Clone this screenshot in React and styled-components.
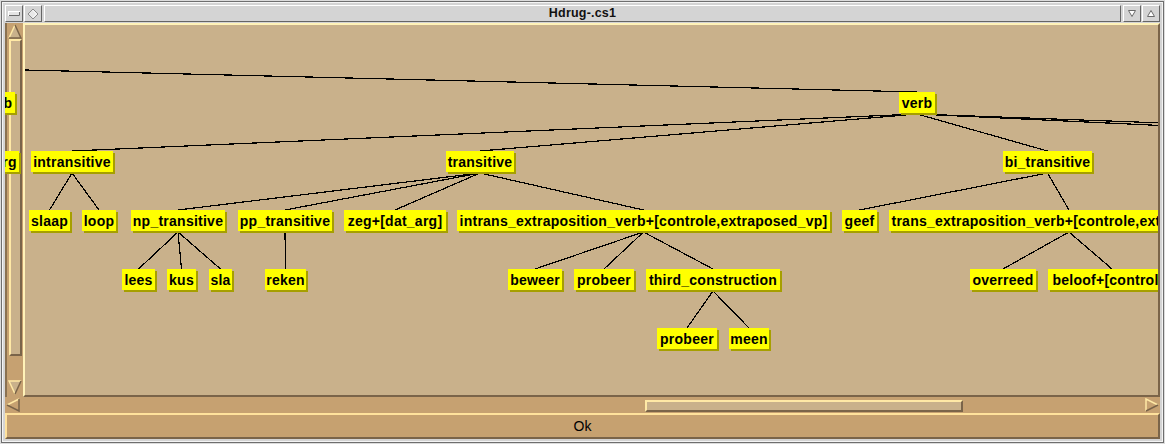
import React from "react";
import styled, { createGlobalStyle } from "styled-components";

const GlobalStyle = createGlobalStyle`
  html, body {
    margin: 0;
    padding: 0;
    background: #d4d4d4;
  }
  body {
    font-family: "Liberation Sans", Arial, sans-serif;
  }
`;

const LIGHT = "#ffe9a6";
const DARK = "#7a6449";
const TAN = "#c9b18b";
const ORANGE = "#c6a171";

const Window = styled.div`
  width: 1165px;
  height: 444px;
  box-sizing: border-box;
  padding: 5px;
  background: #d4d4d4;
  box-shadow: inset 0 0 0 1px #dcdcdc, inset 0 0 0 2px #6e6e6e,
    inset 0 0 0 3px #f4f4f4;
  display: flex;
  flex-direction: column;
`;

const TitleBar = styled.div`
  display: flex;
  gap: 1px;
  height: 17px;
  margin-bottom: 1px;
`;

const TitleButton = styled.div`
  width: 18px;
  box-sizing: border-box;
  border: 1px solid;
  border-color: #ffffff #656565 #656565 #ffffff;
  background: #d4d4d4;
  display: flex;
  align-items: center;
  justify-content: center;
`;

const TitleField = styled.div`
  flex: 1;
  margin: 0 1px;
  box-sizing: border-box;
  border: 1px solid;
  border-color: #ffffff #656565 #656565 #ffffff;
  background: #d4d4d4;
  font-weight: bold;
  font-size: 12.5px;
  letter-spacing: 0.2px;
  line-height: 15px;
  text-align: center;
  color: #111;
`;

const Body = styled.div`
  display: flex;
  height: 374px;
  position: relative;
  overflow: hidden;
`;

const VScroll = styled.div`
  width: 18px;
  box-sizing: border-box;
  border-left: 2px solid #8a7150;
  background: ${ORANGE};
  display: flex;
  flex-direction: column;
  align-items: center;
  padding-top: 1px;
`;

const VThumb = styled.div`
  width: 13px;
  height: ${(p) => p.$size}px;
  margin-top: ${(p) => p.$offset}px;
  box-sizing: border-box;
  background: ${TAN};
  border: 2px solid;
  border-color: ${LIGHT} ${DARK} ${DARK} ${LIGHT};
`;

const VFill = styled.div`
  flex: 1;
`;

const VEnd = styled.div`
  height: 2px;
`;

const Canvas = styled.div`
  flex: 1;
  position: relative;
  overflow: hidden;
  background: ${TAN};
  border: 2px solid;
  border-color: #fff2b8 ${DARK} ${DARK} #fff2b8;
`;

const Edges = styled.svg`
  position: absolute;
  left: 0;
  top: 0;
  display: block;
`;

const NodeLayer = styled.div`
  position: absolute;
  left: 0;
  top: 0;
  right: 2px;
  bottom: 2px;
  overflow: hidden;
  pointer-events: none;
`;

const Node = styled.div`
  position: absolute;
  left: ${(p) => p.$x - 5}px;
  top: ${(p) => p.$y - 23}px;
  width: ${(p) => p.$w}px;
  height: 21px;
  background: #ffff00;
  box-shadow: 2px 2px 0 #a69f00;
  color: #000;
  font-weight: bold;
  font-size: 14px;
  letter-spacing: 0.25px;
  line-height: 22px;
  text-align: center;
  white-space: nowrap;
`;

const HScroll = styled.div`
  height: 16px;
  display: flex;
  align-items: center;
  background: ${ORANGE};
`;

const ArrowSlot = styled.div`
  width: ${(p) => p.$w}px;
  display: flex;
  align-items: center;
  justify-content: center;
`;

const HTrough = styled.div`
  flex: 1;
  align-self: stretch;
  display: flex;
  align-items: center;
`;

const HThumb = styled.div`
  margin-left: ${(p) => p.$offset}px;
  width: ${(p) => p.$size}px;
  height: 12px;
  margin-top: 1px;
  box-sizing: border-box;
  background: ${TAN};
  border: 2px solid;
  border-color: ${LIGHT} ${DARK} ${DARK} ${LIGHT};
`;

const OkButton = styled.div`
  height: 26px;
  box-sizing: border-box;
  border: 2px solid;
  border-color: #ffe29c ${DARK} ${DARK} #ffe29c;
  background: #c6a170;
  font-size: 14px;
  line-height: 22px;
  text-align: center;
  color: #000;
`;

const NODES = [
  { id: "verbL", t: "verb", x: -21, y: 92, w: 36 },
  { id: "argL", t: "arg", x: -8, y: 151, w: 27 },
  { id: "verb", t: "verb", x: 899, y: 92, w: 36 },
  { id: "intr", t: "intransitive", x: 31, y: 151, w: 82 },
  { id: "tr", t: "transitive", x: 446, y: 151, w: 68 },
  { id: "bi", t: "bi_transitive", x: 1003, y: 151, w: 89 },
  { id: "slaap", t: "slaap", x: 29, y: 210, w: 41 },
  { id: "loop", t: "loop", x: 82, y: 210, w: 34 },
  { id: "np", t: "np_transitive", x: 131, y: 210, w: 94 },
  { id: "pp", t: "pp_transitive", x: 238, y: 210, w: 94 },
  { id: "zeg", t: "zeg+[dat_arg]", x: 344, y: 210, w: 102 },
  { id: "ie", t: "intrans_extraposition_verb+[controle,extraposed_vp]", x: 457, y: 210, w: 373 },
  { id: "geef", t: "geef", x: 842, y: 210, w: 35 },
  { id: "te", t: "trans_extraposition_verb+[controle,extraposed_vp]", x: 889, y: 210, w: 360 },
  { id: "lees", t: "lees", x: 122, y: 269, w: 33 },
  { id: "kus", t: "kus", x: 167, y: 269, w: 29 },
  { id: "sla", t: "sla", x: 209, y: 269, w: 23 },
  { id: "reken", t: "reken", x: 265, y: 269, w: 41 },
  { id: "beweer", t: "beweer", x: 508, y: 269, w: 54 },
  { id: "probeer1", t: "probeer", x: 574, y: 269, w: 60 },
  { id: "third", t: "third_construction", x: 646, y: 269, w: 134 },
  { id: "overreed", t: "overreed", x: 970, y: 269, w: 66 },
  { id: "beloof", t: "beloof+[controle]", x: 1048, y: 269, w: 128 },
  { id: "probeer2", t: "probeer", x: 657, y: 328, w: 60 },
  { id: "meen", t: "meen", x: 729, y: 328, w: 40 },
];

const TREE = [
  ["verb", "intr"],
  ["verb", "tr"],
  ["verb", "bi"],
  ["intr", "slaap"],
  ["intr", "loop"],
  ["tr", "np"],
  ["tr", "pp"],
  ["tr", "zeg"],
  ["tr", "ie"],
  ["bi", "geef"],
  ["bi", "te"],
  ["np", "lees"],
  ["np", "kus"],
  ["np", "sla"],
  ["pp", "reken"],
  ["ie", "beweer"],
  ["ie", "probeer1"],
  ["ie", "third"],
  ["third", "probeer2"],
  ["third", "meen"],
  ["te", "overreed"],
  ["te", "beloof"],
];

const byId = Object.fromEntries(NODES.map((n) => [n.id, n]));

const buildLines = () => {
  const lines = TREE.map(([a, b]) => {
    const p = byId[a];
    const c = byId[b];
    return [p.x + p.w / 2, p.y + 22, c.x + c.w / 2, c.y];
  });
  const v = byId.verb;
  const vx = v.x + v.w / 2;
  // edges to nodes outside the visible part of the canvas
  lines.push([0, 69.4, vx, v.y]);
  lines.push([vx, v.y + 22, 1930, 151]);
  lines.push([vx, v.y + 22, 1700, 151]);
  return lines;
};

const TriUp = () => (
  <svg width="14" height="15" viewBox="0 0 14 15">
    <polygon points="7,1 1,14 13,14" fill={TAN} />
    <polyline points="1,14 7,1" stroke={LIGHT} strokeWidth="1.5" fill="none" />
    <polyline points="7,1 13,14 1,14" stroke={DARK} strokeWidth="1.5" fill="none" />
  </svg>
);

const TriDown = () => (
  <svg width="14" height="15" viewBox="0 0 14 15">
    <polygon points="1,1 13,1 7,14" fill={TAN} />
    <polyline points="7,14 1,1 13,1" stroke={LIGHT} strokeWidth="1.5" fill="none" />
    <polyline points="13,1 7,14" stroke={DARK} strokeWidth="1.5" fill="none" />
  </svg>
);

const TriLeft = () => (
  <svg width="14" height="14" viewBox="0 0 14 14">
    <polygon points="1,7 13,1 13,13" fill={ORANGE} />
    <polyline points="1,7 13,1" stroke={LIGHT} strokeWidth="1.5" fill="none" />
    <polyline points="13,1 13,13 1,7" stroke={DARK} strokeWidth="1.5" fill="none" />
  </svg>
);

const TriRight = () => (
  <svg width="14" height="14" viewBox="0 0 14 14">
    <polygon points="1,1 13,7 1,13" fill={ORANGE} />
    <polyline points="1,13 1,1 13,7" stroke={LIGHT} strokeWidth="1.5" fill="none" />
    <polyline points="13,7 1,13" stroke={DARK} strokeWidth="1.5" fill="none" />
  </svg>
);

const App = () => {
  const lines = buildLines();

  return (
    <>
      <GlobalStyle />
      <Window>
        <TitleBar>
          <TitleButton>
            <svg width="12" height="5" viewBox="0 0 12 5">
              <rect x="0.5" y="0.5" width="11" height="4" fill="#e4e4e4" stroke="#ffffff" />
              <path d="M1 4.5 H11.5 V1" stroke="#6a6a6a" fill="none" />
            </svg>
          </TitleButton>
          <TitleButton>
            <svg width="12" height="12" viewBox="0 0 12 12">
              <path d="M6 1 L1 6 L6 11 L11 6 Z" stroke="#8a8a8a" fill="#e8e8e8" />
              <path d="M6 2.5 L9.5 6 L6 9.5" stroke="#ffffff" fill="none" />
            </svg>
          </TitleButton>
          <TitleField>Hdrug-.cs1</TitleField>
          <TitleButton>
            <svg width="8" height="7" viewBox="0 0 8 7">
              <path d="M0.5 0.5 H7.5 L4 6.5 Z" stroke="#6a6a6a" fill="#ffffff" />
            </svg>
          </TitleButton>
          <TitleButton>
            <svg width="8" height="7" viewBox="0 0 8 7">
              <path d="M4 0.5 L7.5 6.5 H0.5 Z" stroke="#6a6a6a" fill="#ffffff" />
            </svg>
          </TitleButton>
        </TitleBar>

        <Body>
          <VScroll>
            <TriUp />
            <VThumb $offset={0} $size={317} />
            <VFill />
            <TriDown />
            <VEnd />
          </VScroll>
          <Canvas>
            <Edges width="1133" height="370" viewBox="25 25 1133 370">
              {lines.map(([x1, y1, x2, y2], i) => (
                <line
                  key={i}
                  x1={x1}
                  y1={y1}
                  x2={x2}
                  y2={y2}
                  stroke="#000"
                  strokeWidth="1.2"
                  shapeRendering="crispEdges"
                />
              ))}
            </Edges>
          </Canvas>
          <NodeLayer>
            {NODES.map((n) => (
              <Node key={n.id} $x={n.x} $y={n.y} $w={n.w}>
                {n.t}
              </Node>
            ))}
          </NodeLayer>
        </Body>

        <HScroll>
          <ArrowSlot $w={16}>
            <TriLeft />
          </ArrowSlot>
          <HTrough>
            <HThumb $offset={624} $size={318} />
          </HTrough>
          <ArrowSlot $w={17}>
            <TriRight />
          </ArrowSlot>
        </HScroll>

        <OkButton>Ok</OkButton>
      </Window>
    </>
  );
};

export default App;
